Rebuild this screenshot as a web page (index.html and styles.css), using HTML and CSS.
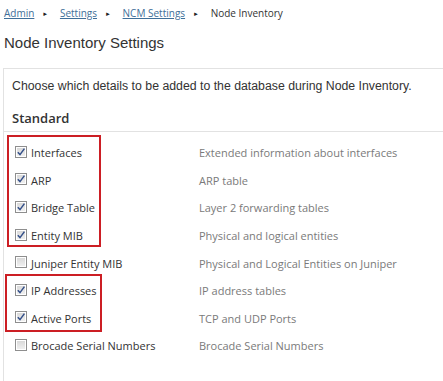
FILE: index.html
```html
<!DOCTYPE html>
<html>
<head>
	<meta charset="utf-8">
	<title>Node Inventory Settings</title>
	<link rel="stylesheet" href="styles.css">
</head>
<body>
	<div class="crumbs">
		<a href="#">Admin</a><span class="sep">&#9658;</span>
		<a href="#">Settings</a><span class="sep">&#9658;</span>
		<a href="#">NCM Settings</a><span class="sep">&#9658;</span>
		<span class="here">Node Inventory</span>
	</div>
	<h1 class="title">Node Inventory Settings</h1>

	<div class="panel">
		<p class="intro">Choose which details to be added to the database during Node Inventory.</p>
		<h3 class="group">Standard</h3>

		<div class="list">
			<div class="mark mark-a"></div>
			<div class="mark mark-b"></div>

			<label class="opt"><span class="box on"><svg viewBox="0 0 10 10"><path d="M1.8 5.2 L4 7.6 L8.4 1.6" /></svg></span>Interfaces</label>
			<span class="desc">Extended information about interfaces</span>

			<label class="opt"><span class="box on"><svg viewBox="0 0 10 10"><path d="M1.8 5.2 L4 7.6 L8.4 1.6" /></svg></span>ARP</label>
			<span class="desc">ARP table</span>

			<label class="opt"><span class="box on"><svg viewBox="0 0 10 10"><path d="M1.8 5.2 L4 7.6 L8.4 1.6" /></svg></span>Bridge Table</label>
			<span class="desc">Layer 2 forwarding tables</span>

			<label class="opt"><span class="box on"><svg viewBox="0 0 10 10"><path d="M1.8 5.2 L4 7.6 L8.4 1.6" /></svg></span>Entity MIB</label>
			<span class="desc">Physical and logical entities</span>

			<label class="opt"><span class="box"></span>Juniper Entity MIB</label>
			<span class="desc">Physical and Logical Entities on Juniper</span>

			<label class="opt"><span class="box on"><svg viewBox="0 0 10 10"><path d="M1.8 5.2 L4 7.6 L8.4 1.6" /></svg></span>IP Addresses</label>
			<span class="desc">IP address tables</span>

			<label class="opt"><span class="box on"><svg viewBox="0 0 10 10"><path d="M1.8 5.2 L4 7.6 L8.4 1.6" /></svg></span>Active Ports</label>
			<span class="desc">TCP and UDP Ports</span>

			<label class="opt"><span class="box"></span>Brocade Serial Numbers</label>
			<span class="desc">Brocade Serial Numbers</span>
		</div>
	</div>
</body>
</html>
```

FILE: styles.css
```css
body {
	margin:0;
	background:#FFF;
	color:#333;
	font-family:"Open Sans", sans-serif;
	overflow:hidden;
}
.crumbs {
	padding:6px 0 0 4px;
	height:17px;
	font-size:10px;
	color:#333;
}
.crumbs a {
	color:#3F6F99;
	text-decoration:underline;
}
.crumbs .sep {
	display:inline-block;
	font-size:6px;
	margin:0 9px 0 8px;
	vertical-align:1px;
	color:#222;
}
.title {
	margin:11px 0 0 4px;
	font-family:"Liberation Sans", Arial, sans-serif;
	font-weight:normal;
	font-size:15px;
	color:#333;
}
.panel {
	margin:17px 0 0 3px;
	border-top:1px solid #E2E2E2;
	border-left:1px solid #E2E2E2;
	padding:0 0 21px 0;
}
.intro {
	margin:0;
	padding:10px 0 0 8px;
	font-family:"Liberation Sans", Arial, sans-serif;
	font-size:12.3px;
	color:#333;
}
.group {
	margin:0;
	padding:16px 0 4px 8px;
	font-size:13px;
	font-weight:600;
	color:#333;
	border-bottom:1px solid #E2E2E2;
}
.list {
	position:relative;
	display:grid;
	grid-template-columns:184px 1fr;
	grid-auto-rows:27.6px;
	align-items:center;
	padding:7px 0 0 11px;
	font-size:11px;
}
.opt {
	display:flex;
	align-items:center;
	color:#333;
}
.box {
	display:inline-block;
	box-sizing:border-box;
	width:12px;
	height:12px;
	margin:-2px 4px 0 0;
	border:1px solid #8E8E8E;
	background:linear-gradient(#D6D6D6, #F2F2F2);
	box-shadow:inset 0 0 0 1px #FFF;
}
.box svg {
	display:block;
	width:10px;
	height:10px;
	fill:none;
	stroke:#34508A;
	stroke-width:1.5;
}
.desc {
	color:#7A7A7A;
}
.mark {
	position:absolute;
	border:2px solid #CC1E24;
}
.mark-a {
	left:3px;
	top:3px;
	width:90px;
	height:108px;
}
.mark-b {
	left:1px;
	top:142px;
	width:93px;
	height:54px;
}
```
